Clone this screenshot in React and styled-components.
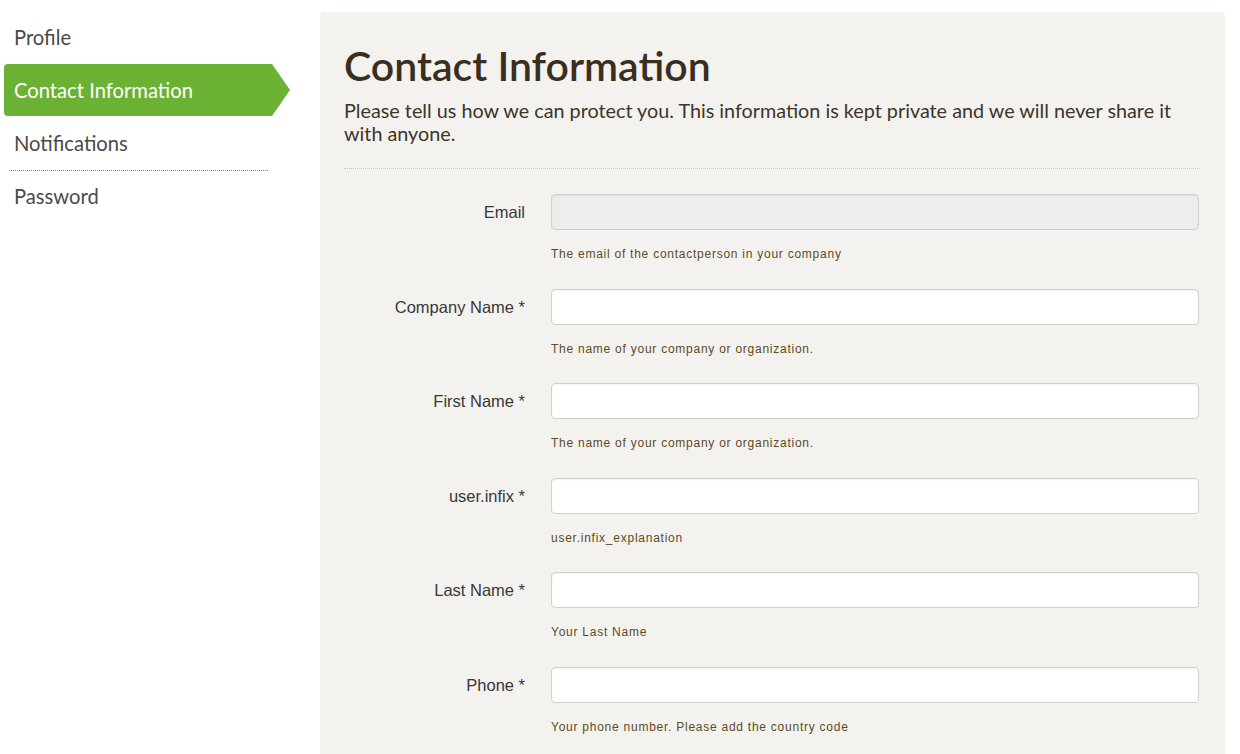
import React from "react";
import styled, { createGlobalStyle, css } from "styled-components";

const Global = createGlobalStyle`
  html, body { margin: 0; padding: 0; background: #fff; }
  body { font-family: Lato, "Open Sans", sans-serif; }
  * { box-sizing: border-box; }
`;

const Page = styled.div`
  display: flex;
  align-items: flex-start;
  padding: 11px 15px 0 4px;
  height: 754px;
  overflow: hidden;
`;

const Sidebar = styled.nav`
  width: 316px;
  flex-shrink: 0;
  display: flex;
  flex-direction: column;
`;

const NavItem = styled.a`
  position: relative;
  display: flex;
  align-items: center;
  height: 53px;
  padding: 0 0 1px 10px;
  font-family: Lato, sans-serif;
  font-size: 20.2px;
  color: #4a4a4a;
  text-decoration: none;
  width: 286px;
  ${(p) =>
    p.$active &&
    css`
      color: #fff;
      background: #6bb133;
      border-radius: 4px 0 0 4px;
      clip-path: polygon(0 0, calc(100% - 18px) 0, 100% 50%, calc(100% - 18px) 100%, 0 100%);
      height: 52px;
      margin-bottom: 1px;
      padding-bottom: 0;
    `}
  ${(p) =>
    p.$separator &&
    css`
      &::after {
        content: "";
        position: absolute;
        left: 5px;
        width: 259px;
        bottom: -1px;
        border-bottom: 1px dotted #5fa82a;
      }
    `}
`;

const Panel = styled.main`
  flex: 1;
  margin-top: 1px;
  background: #f3f2ef;
  border-radius: 4px 4px 0 0;
  padding: 25px 25px 40px 24px;
  min-height: 760px;
`;

const Title = styled.h1`
  margin: 0;
  font-family: Lato, sans-serif;
  font-weight: 600;
  font-size: 41px;
  line-height: 58px;
  color: #3a2e1f;
`;

const Intro = styled.p`
  margin: 4px 0 0;
  font-family: Lato, sans-serif;
  font-size: 19.8px;
  line-height: 23px;
  color: #3d3529;
  padding-bottom: 23px;
  border-bottom: 1px dotted #c9c6bf;
`;

const Form = styled.form`
  display: flex;
  flex-direction: column;
  padding-top: 25px;
`;

const Row = styled.div`
  display: grid;
  grid-template-columns: 181px 1fr;
  column-gap: 26px;
  align-items: center;
  margin-bottom: 26.5px;
`;

const Label = styled.label`
  font-family: "Liberation Sans", Arial, sans-serif;
  font-size: 16.5px;
  line-height: 20px;
  color: #383838;
  text-align: right;
`;

const Input = styled.input`
  height: 36px;
  width: 648px;
  border: 1px solid #d2d0cc;
  border-radius: 4px;
  background: ${(p) => (p.disabled ? "#ededed" : "#fff")};
  box-shadow: inset 0 1px 2px rgba(0, 0, 0, 0.06);
  font-size: 14px;
  padding: 0 8px;
  outline: none;
`;

const Help = styled.div`
  grid-column: 2;
  margin-top: 16px;
  font-family: "Liberation Sans", Arial, sans-serif;
  font-size: 12px;
  line-height: 16px;
  letter-spacing: 0.75px;
  color: #5e4a26;
`;

const fields = [
  { label: "Email", help: "The email of the contactperson in your company", disabled: true },
  { label: "Company Name *", help: "The name of your company or organization." },
  { label: "First Name *", help: "The name of your company or organization." },
  { label: "user.infix *", help: "user.infix_explanation" },
  { label: "Last Name *", help: "Your Last Name" },
  { label: "Phone *", help: "Your phone number. Please add the country code" },
];

export default function App() {
  return (
    <>
      <Global />
      <Page>
        <Sidebar>
          <NavItem>Profile</NavItem>
          <NavItem $active>Contact Information</NavItem>
          <NavItem $separator>Notifications</NavItem>
          <NavItem>Password</NavItem>
        </Sidebar>
        <Panel>
          <Title>Contact Information</Title>
          <Intro>
            Please tell us how we can protect you. This information is kept private and we will never share it
            with anyone.
          </Intro>
          <Form>
            {fields.map((f) => (
              <Row key={f.label}>
                <Label>{f.label}</Label>
                <Input disabled={f.disabled} />
                <Help>{f.help}</Help>
              </Row>
            ))}
          </Form>
        </Panel>
      </Page>
    </>
  );
}
